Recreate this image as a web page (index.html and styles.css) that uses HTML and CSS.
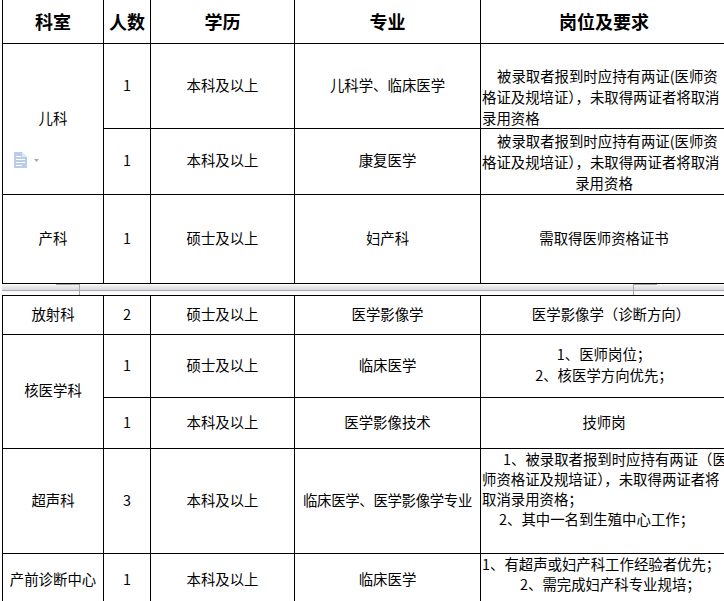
FILE: index.html
```
<!DOCTYPE html>
<html lang="zh-CN">
<head>
<meta charset="utf-8">
<title>招聘岗位</title>
<link rel="stylesheet" href="styles.css">
</head>
<body>
<div class="page">
  <table class="grid grid-top">
    <colgroup><col class="c1"><col class="c2"><col class="c3"><col class="c4"><col class="c5"></colgroup>
    <tr class="r-head">
      <th>科室</th><th>人数</th><th>学历</th><th>专业</th><th>岗位及要求</th>
    </tr>
    <tr class="r1">
      <td rowspan="2" class="dept">儿科
        <span class="paste-icon">
          <svg width="26" height="16" viewBox="0 0 26 16">
            <path d="M0 0 H8 L13 5 V16 H0 Z" fill="#b9cdea"/>
            <path d="M8 0 V5 H13" fill="#dfe8f6"/>
            <rect x="2" y="4" width="5" height="1" fill="#fff"/>
            <rect x="2" y="7" width="9" height="1" fill="#fff"/>
            <rect x="2" y="10" width="9" height="1" fill="#fff"/>
            <rect x="2" y="13" width="6" height="1" fill="#fff"/>
            <path d="M20 7 H25 L22.5 10 Z" fill="#a8a8a8"/>
          </svg>
        </span>
      </td>
      <td>1</td><td>本科及以上</td><td>儿科学、临床医学</td>
      <td class="req req-bottom">
        <div class="ln ln-indent">被录取者报到时应持有两证(医师资</div>
        <div class="ln ln-left">格证及规培证），未取得两证者将取消</div>
        <div class="ln ln-left">录用资格</div>
      </td>
    </tr>
    <tr class="r2">
      <td>1</td><td>本科及以上</td><td>康复医学</td>
      <td class="req">
        <div class="ln ln-indent">被录取者报到时应持有两证(医师资</div>
        <div class="ln ln-left">格证及规培证），未取得两证者将取消</div>
        <div class="ln ln-center">录用资格</div>
      </td>
    </tr>
    <tr class="r3">
      <td>产科</td><td>1</td><td>硕士及以上</td><td>妇产科</td><td>需取得医师资格证书</td>
    </tr>
  </table>

  <div class="page-break">
    <span class="mark mark-left"></span>
    <span class="mark mark-right"></span>
  </div>

  <table class="grid grid-bottom">
    <colgroup><col class="c1"><col class="c2"><col class="c3"><col class="c4"><col class="c5"></colgroup>
    <tr class="r4">
      <td>放射科</td><td>2</td><td>硕士及以上</td><td>医学影像学</td><td class="shift-right">医学影像学（诊断方向）</td>
    </tr>
    <tr class="r5">
      <td rowspan="2">核医学科</td><td>1</td><td>硕士及以上</td><td>临床医学</td>
      <td class="req req-mid">
        <div class="ln ln-center">1、医师岗位；</div>
        <div class="ln ln-center">2、核医学方向优先；</div>
      </td>
    </tr>
    <tr class="r6">
      <td>1</td><td>本科及以上</td><td>医学影像技术</td><td>技师岗</td>
    </tr>
    <tr class="r7">
      <td>超声科</td><td>3</td><td>本科及以上</td><td class="tight">临床医学、医学影像学专业</td>
      <td class="req req-top req-20">
        <div class="ln ln-indent2">1、被录取者报到时应持有两证（医</div>
        <div class="ln ln-left">师资格证及规培证），未取得两证者将</div>
        <div class="ln ln-left">取消录用资格；</div>
        <div class="ln ln-indent3">2、其中一名到生殖中心工作；</div>
      </td>
    </tr>
    <tr class="r8">
      <td>产前诊断中心</td><td>1</td><td>本科及以上</td><td>临床医学</td>
      <td class="req req-top req-20">
        <div class="ln ln-left">1、有超声或妇产科工作经验者优先；</div>
        <div class="ln ln-indent4">2、需完成妇产科专业规培；</div>
      </td>
    </tr>
  </table>
</div>
</body>
</html>
```

FILE: styles.css
```
html, body {
  margin: 0;
  padding: 0;
  background: #ffffff;
}
body {
  width: 724px;
  height: 601px;
  overflow: hidden;
  font-family: "Noto Sans CJK SC", "Noto Sans", sans-serif;
  color: #000;
}
.page {
  padding-left: 2px;
}
.grid {
  border-collapse: collapse;
  table-layout: fixed;
  width: 725px;
  font-size: 14.4px;
}
.grid-top {
  margin-top: -1px;
}
.c1 { width: 101px; }
.c2 { width: 47px; }
.c3 { width: 144px; }
.c4 { width: 186px; }
.c5 { width: 247px; }

.grid th,
.grid td {
  border: 1px solid #000;
  padding: 0 1px 4px 1px;
  text-align: center;
  vertical-align: middle;
  white-space: nowrap;
  line-height: 21px;
  font-weight: normal;
  overflow: visible;
}
.grid th {
  font-size: 18px;
  font-weight: bold;
  padding-bottom: 1px;
}
.r-head { height: 44px; }
.r1 { height: 85px; }
.r2 { height: 66px; }
.r3 { height: 89px; }
.r4 { height: 39px; }
.r5 { height: 63px; }
.r6 { height: 51px; }
.r7 { height: 105px; }
.r8 { height: 54px; }

.dept {
  position: relative;
}
.paste-icon {
  position: absolute;
  left: 11px;
  top: 108px;
  width: 26px;
  height: 16px;
  line-height: 0;
}

.tight {
  letter-spacing: -0.3px;
}
.grid td.shift-right {
  padding-left: 15px;
}

.grid td.req { padding-bottom: 0; }
.grid td.req-mid { padding-bottom: 4px; }
.grid td.req-bottom { vertical-align: bottom; }
.grid td.req-top { vertical-align: top; }
.grid td.req-20 { line-height: 20px; }

.ln { white-space: nowrap; }
.ln-left { text-align: left; }
.ln-center { text-align: center; }
.ln-indent { text-align: left; padding-left: 15px; }
.ln-indent2 { text-align: left; padding-left: 21px; }
.ln-indent3 { text-align: left; padding-left: 17px; }
.ln-indent4 { text-align: left; padding-left: 38px; }

.page-break {
  position: relative;
  height: 11px;
  width: 725px;
  background: linear-gradient(to bottom,
    #ffffff 0px, #ffffff 1px,
    #f2f2f2 1px, #d9d9dc 6px,
    #a9aab3 6px, #a9aab3 7px,
    #f6f6f6 7px, #ffffff 11px);
}
.mark {
  position: absolute;
  top: 0;
  height: 11px;
  border-top: 1px solid #a8a8a8;
  box-sizing: border-box;
}
.mark-left {
  left: 54px;
  width: 24px;
  border-right: 1px solid #a8a8a8;
}
.mark-right {
  left: 631px;
  width: 24px;
  border-left: 1px solid #a8a8a8;
}
```
